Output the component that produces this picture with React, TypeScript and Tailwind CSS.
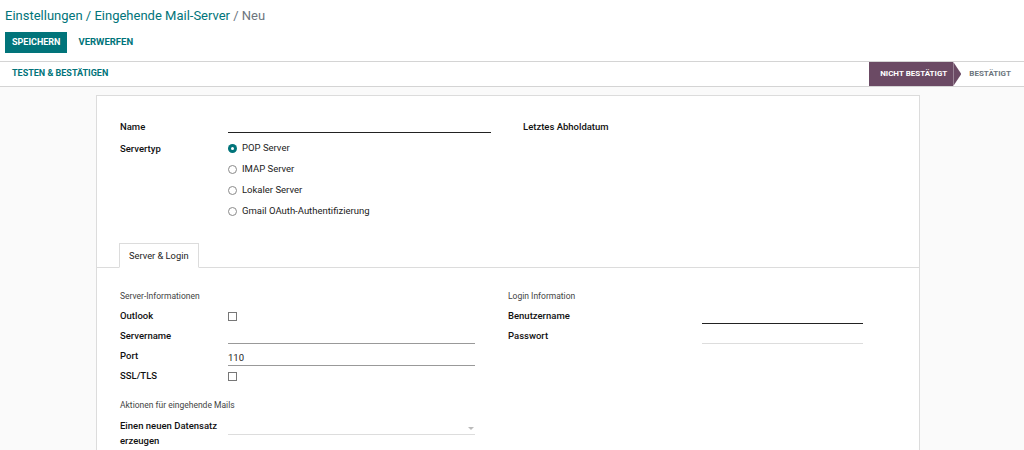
import React from 'react'

const teal = 'text-[#01747a]'

function Radio({ checked, label }: { checked?: boolean; label: string }) {
  return (
    <div className="flex h-[21px] items-center gap-[5px]">
      {checked ? (
        <span className="flex h-[9px] w-[9px] items-center justify-center rounded-full bg-[#01747a]">
          <span className="h-[3px] w-[3px] rounded-full bg-white" />
        </span>
      ) : (
        <span className="h-[9px] w-[9px] rounded-full border border-[#8a8a8a] bg-white" />
      )}
      <span className="text-[9.5px] text-[#222]">{label}</span>
    </div>
  )
}

function Checkbox() {
  return <span className="block h-[9px] w-[9px] border border-[#777] bg-white" />
}

function Row({
  label,
  labelW,
  children,
  h = 'h-[20px]',
}: {
  label: React.ReactNode
  labelW: string
  children?: React.ReactNode
  h?: string
}) {
  return (
    <div className={`flex ${h} items-center`}>
      <div className={`${labelW} shrink-0 text-[9.5px] font-medium text-[#111]`}>{label}</div>
      <div className="flex-1">{children}</div>
    </div>
  )
}

export default function App() {
  return (
    <div className="min-h-[450px] bg-[#fafafa] font-['Roboto',sans-serif]">
      {/* control panel */}
      <div className="border-b border-[#d4d4d4] bg-white px-[5px] pb-[8px] pt-[7px]">
        <div className="text-[13px] leading-[18px] text-[#01747a]">
          Einstellungen / Eingehende Mail-Server <span className="text-[#6c757d]">/ Neu</span>
        </div>
        <div className="mt-[7px] flex items-center gap-[11px]">
          <button className="h-[21px] bg-[#01747a] px-[7px] text-[9px] font-bold text-white">SPEICHERN</button>
          <button className={`text-[9.5px] font-bold ${teal}`}>VERWERFEN</button>
        </div>
      </div>

      {/* status bar */}
      <div className="flex h-[25px] items-center justify-between border-b border-[#d4d4d4] bg-white">
        <div className={`pl-[12px] text-[9px] font-bold ${teal}`}>TESTEN &amp; BESTÄTIGEN</div>
        <div className="flex h-full items-center">
          <div className="flex h-full items-center bg-[#6b4a64] pl-[11px] pr-[6px] text-[8px] font-bold text-white">
            NICHT BESTÄTIGT
          </div>
          <div className="h-full w-[8px] bg-[#6b4a64] [clip-path:polygon(0_0,100%_50%,0_100%)]" />
          <div className="pl-[8px] pr-[13px] text-[8px] font-bold text-[#6c757d]">BESTÄTIGT</div>
        </div>
      </div>

      {/* sheet */}
      <div className="ml-[96px] mt-[8px] h-[400px] w-[824px] border border-[#dcdcdc] bg-white">
        <div className="flex px-[23px] pt-[21px]">
          <div className="w-[371px]">
            <Row label="Name" labelW="w-[108px]" h="h-[21px]">
              <div className="mt-[9px] h-px bg-[#222]" />
            </Row>
            <div className="flex">
              <div className="w-[108px] shrink-0 pt-[4px] text-[9.5px] font-medium text-[#111]">Servertyp</div>
              <div className="flex flex-col">
                <Radio checked label="POP Server" />
                <Radio label="IMAP Server" />
                <Radio label="Lokaler Server" />
                <Radio label="Gmail OAuth-Authentifizierung" />
              </div>
            </div>
          </div>
          <div className="ml-[32px] flex h-[21px] items-center text-[9.5px] font-medium text-[#111]">
            Letztes Abholdatum
          </div>
        </div>

        {/* notebook */}
        <div className="mt-[21px] flex border-b border-[#dcdcdc] pl-[22px]">
          <div className="-mb-px flex h-[25px] items-center border border-b-white border-[#dcdcdc] bg-white px-[9px] text-[9.3px] text-[#222]">
            Server &amp; Login
          </div>
        </div>

        <div className="flex px-[23px] pt-[21px]">
          <div className="w-[355px]">
            <div className="flex h-[15px] items-center text-[8.5px] text-[#444]">Server-Informationen</div>
            <div className="mt-[2px]">
              <Row label="Outlook" labelW="w-[108px]">
                <Checkbox />
              </Row>
              <Row label="Servername" labelW="w-[108px]">
                <div className="mt-[14px] h-px bg-[#999]" />
              </Row>
              <Row label="Port" labelW="w-[108px]">
                <div className="border-b border-[#999] pt-[4px] text-[9.5px] leading-[14px] text-[#222]">110</div>
              </Row>
              <Row label="SSL/TLS" labelW="w-[108px]">
                <Checkbox />
              </Row>
            </div>
            <div className="mt-[12px] flex h-[15px] items-center text-[8.5px] text-[#444]">
              Aktionen für eingehende Mails
            </div>
            <div className="mt-[5px] flex">
              <div className="w-[108px] shrink-0 text-[9.5px] font-medium leading-[15px] text-[#111]">
                Einen neuen Datensatz erzeugen
              </div>
              <div className="relative flex-1">
                <div className="mt-[16px] h-px bg-[#ddd]" />
                <span className="absolute right-[1px] top-[9px] h-0 w-0 border-x-[3px] border-t-[3px] border-x-transparent border-t-[#bbb]" />
              </div>
            </div>
          </div>
          <div className="ml-[33px] w-[355px]">
            <div className="flex h-[15px] items-center text-[8.5px] text-[#444]">Login Information</div>
            <div className="mt-[2px]">
              <Row label="Benutzername" labelW="w-[194px]">
                <div className="mt-[14px] h-px bg-[#222]" />
              </Row>
              <Row label="Passwort" labelW="w-[194px]">
                <div className="mt-[14px] h-px bg-[#ddd]" />
              </Row>
            </div>
          </div>
        </div>
      </div>
    </div>
  )
}
